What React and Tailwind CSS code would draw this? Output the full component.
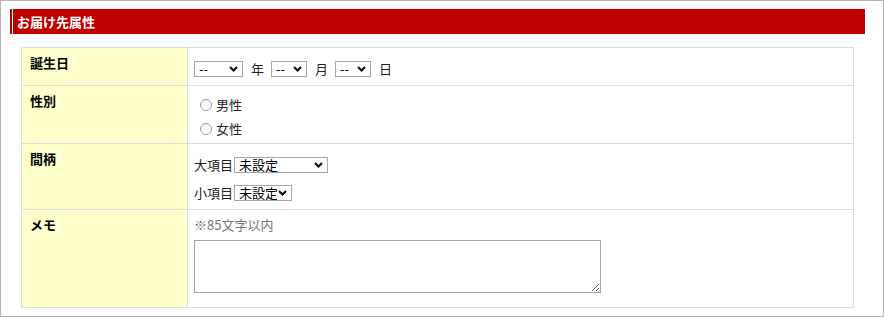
import React from "react";

const FONT = { fontFamily: '"Noto Sans CJK JP", "Noto Sans", sans-serif' };

const Chevron = () => (
  <svg
    className="pointer-events-none absolute right-[5px] top-1/2 -translate-y-1/2"
    width="9"
    height="6"
    viewBox="0 0 9 6"
  >
    <path d="M1 1 L4.5 4.5 L8 1" fill="none" stroke="#111" strokeWidth="2.2" />
  </svg>
);

const Select = ({ width, value, options }) => (
  <span className="relative inline-block align-middle" style={{ width }}>
    <select
      defaultValue={value}
      className="block w-full h-[16px] appearance-none border border-[#a5a5a5] bg-white pl-[4px] pr-[14px] text-[13px] leading-[14px] text-black rounded-none outline-none"
      style={FONT}
    >
      {options.map((o) => (
        <option key={o} value={o}>
          {o}
        </option>
      ))}
    </select>
    <Chevron />
  </span>
);

const Radio = ({ name, label }) => (
  <label className="flex items-center h-[24px]">
    <input
      type="radio"
      name={name}
      className="appearance-none w-[12px] h-[12px] rounded-full border border-[#9a9a9a] bg-white ml-[6px] mr-[4px] m-0"
    />
    <span>{label}</span>
  </label>
);

const Row = ({ label, height, children, last }) => (
  <div
    className={`flex ${last ? "" : "border-b border-[#dddddd]"}`}
    style={{ height }}
  >
    <div className="w-[166px] shrink-0 bg-[#ffffcc] border-r border-[#dddddd] pl-[8px] pt-[5px] text-[13px] leading-[20px] font-bold text-black">
      {label}
    </div>
    <div className="flex-1 pl-[6px]">{children}</div>
  </div>
);

const App = () => {
  const years = ["--", "1990", "1991", "1992"];
  const small = ["--", "1", "2", "3"];

  return (
    <div
      className="w-[884px] h-[317px] border border-[#b4b4b4] bg-white pt-[8px] pl-[9px] text-[13px] text-[#222]"
      style={FONT}
    >
      {/* SECTION HEADER */}
      <div className="flex w-[855px] h-[25px]">
        <div className="w-[2px] bg-[#bf0000]" />
        <div className="w-px bg-white" />
        <div className="flex-1 bg-[#bf0000] flex items-center pl-[4px] text-[13px] font-bold text-white">
          お届け先属性
        </div>
      </div>

      {/* FORM TABLE */}
      <div className="mt-[13px] ml-[11px] w-[833px] border border-[#dddddd]">
        <Row label="誕生日" height={38}>
          <div className="flex items-center pt-[13px]">
            <Select width={49} value="--" options={years} />
            <span className="ml-[8px] mr-[7px] leading-[16px]">年</span>
            <Select width={36} value="--" options={small} />
            <span className="ml-[8px] mr-[7px] leading-[16px]">月</span>
            <Select width={36} value="--" options={small} />
            <span className="ml-[8px] leading-[16px]">日</span>
          </div>
        </Row>

        <Row label="性別" height={58}>
          <div className="pt-[7px]">
            <Radio name="gender" label="男性" />
            <Radio name="gender" label="女性" />
          </div>
        </Row>

        <Row label="間柄" height={66}>
          <div className="pt-[13px] flex flex-col gap-[12px]">
            <div className="flex items-center h-[16px]">
              <span className="mr-[1px]">大項目</span>
              <Select width={94} value="未設定" options={["未設定", "家族", "友人"]} />
            </div>
            <div className="flex items-center h-[16px]">
              <span className="mr-[1px]">小項目</span>
              <Select width={58} value="未設定" options={["未設定", "父", "母"]} />
            </div>
          </div>
        </Row>

        <Row label="メモ" height={97} last>
          <div className="pt-[5px]">
            <div className="leading-[20px] text-[#777]">※85文字以内</div>
            <textarea
              className="block mt-[5px] w-[407px] h-[53px] border border-[#a5a5a5] bg-white outline-none"
            />
          </div>
        </Row>
      </div>
    </div>
  );
};

export default App;
